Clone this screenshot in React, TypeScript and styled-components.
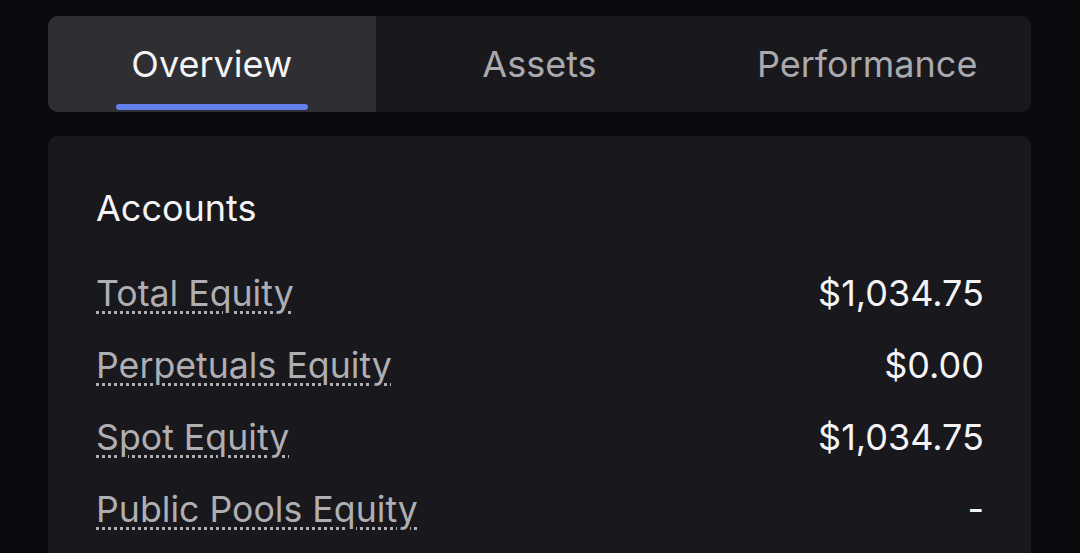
import React from "react";
import styled, { createGlobalStyle } from "styled-components";

const Global = createGlobalStyle`
  html, body {
    margin: 0;
    padding: 0;
    background: #0a0a0f;
    font-family: Inter, "Noto Sans", sans-serif;
    -webkit-font-smoothing: antialiased;
  }
`;

const Page = styled.div`
  padding: 16px 49px 0 48px;
  height: 553px;
  box-sizing: border-box;
  overflow: hidden;
`;

const Tabs = styled.div`
  display: grid;
  grid-template-columns: repeat(3, 1fr);
  height: 96px;
  background: #18181d;
  border-radius: 10px;
  overflow: hidden;
`;

const Tab = styled.div<{ $active?: boolean }>`
  position: relative;
  display: flex;
  align-items: center;
  justify-content: center;
  font-size: 36px;
  color: ${(p) => (p.$active ? "#f4f4f6" : "#a9a9ae")};
  background: ${(p) => (p.$active ? "#2e2e33" : "transparent")};

  &::after {
    content: "";
    display: ${(p) => (p.$active ? "block" : "none")};
    position: absolute;
    left: 68px;
    width: 192px;
    bottom: 2px;
    height: 6px;
    border-radius: 3px;
    background: #6381ea;
  }
`;

const Card = styled.section`
  margin-top: 24px;
  background: #18181d;
  border-radius: 10px;
  padding: 50px 47px 40px 48px;
`;

const Title = styled.h2`
  margin: 0 0 27px;
  font-size: 36px;
  font-weight: 400;
  color: #f4f4f6;
  line-height: 44px;
`;

const Row = styled.div`
  display: flex;
  justify-content: space-between;
  align-items: center;
  height: 72px;
`;

const Label = styled.span`
  font-size: 35.7px;
  color: #aeaeb3;
  text-decoration: underline dotted #aeaeb3;
  text-decoration-thickness: 3px;
  text-underline-offset: 5px;
`;

const Value = styled.span`
  font-size: 36px;
  color: #f4f4f6;
`;

const rows = [
  { label: "Total Equity", value: "$1,034.75" },
  { label: "Perpetuals Equity", value: "$0.00" },
  { label: "Spot Equity", value: "$1,034.75" },
  { label: "Public Pools Equity", value: "-" },
];

const App: React.FC = () => {
  return (
    <>
      <Global />
      <Page>
        <Tabs>
          <Tab $active>Overview</Tab>
          <Tab>Assets</Tab>
          <Tab>Performance</Tab>
        </Tabs>
        <Card>
          <Title>Accounts</Title>
          {rows.map((r) => (
            <Row key={r.label}>
              <Label>{r.label}</Label>
              <Value>{r.value}</Value>
            </Row>
          ))}
        </Card>
      </Page>
    </>
  );
};

export default App;
